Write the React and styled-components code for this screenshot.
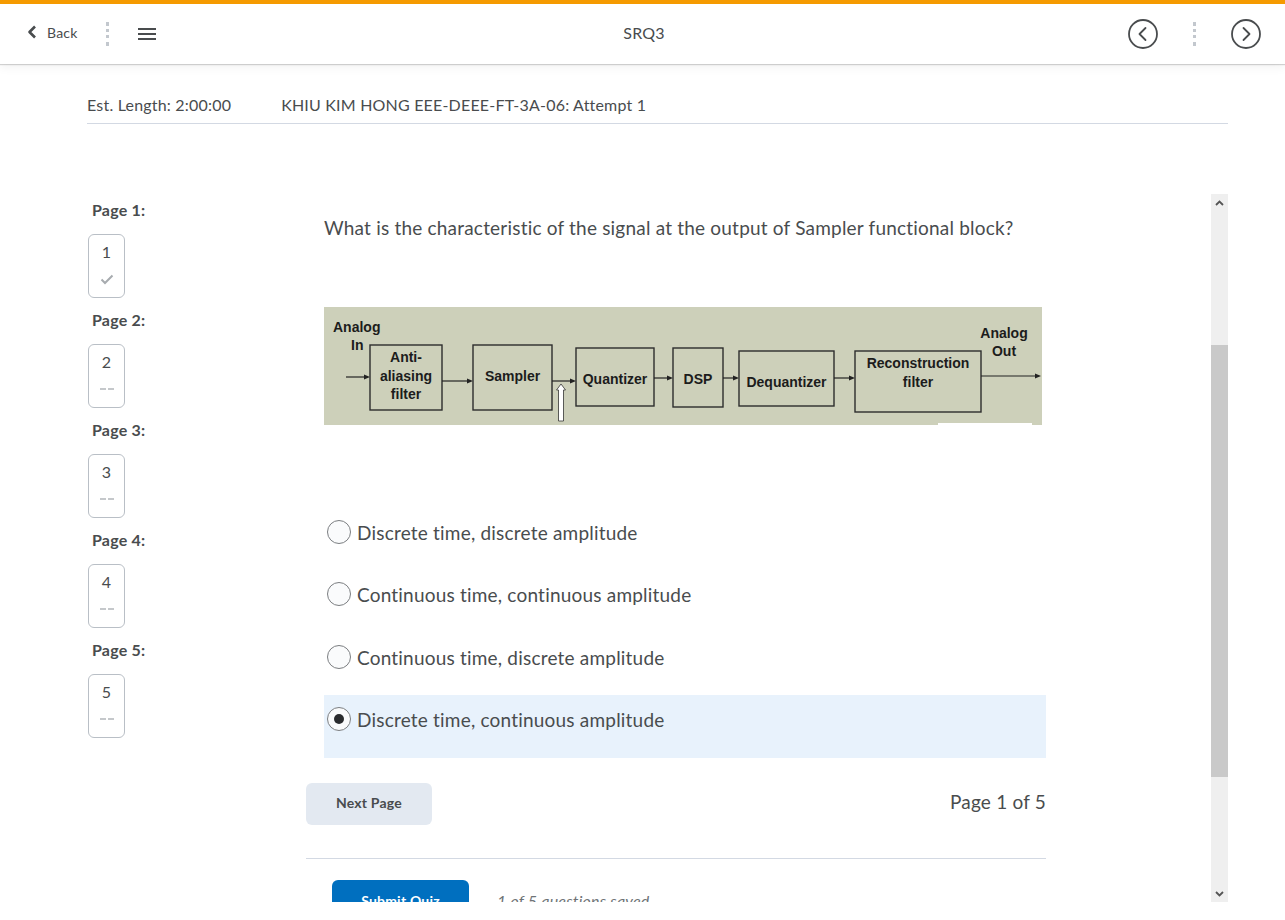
import React from 'react';
import styled, { createGlobalStyle } from 'styled-components';

const GlobalStyle = createGlobalStyle`
  html, body {
    margin: 0;
    padding: 0;
    background: #ffffff;
  }
  body {
    font-family: Lato, "Open Sans", "Liberation Sans", sans-serif;
    color: #494c4e;
    letter-spacing: 0.2px;
  }
  * {
    box-sizing: border-box;
  }
`;

const TopBar = styled.header`
  height: 64px;
  border-top: 4px solid #f59a00;
  display: flex;
  align-items: center;
  justify-content: space-between;
  padding: 0 24px 0 27px;
  background: #fff;
  box-shadow: 0 1px 1px rgba(0, 0, 0, 0.16), 0 3px 10px rgba(0, 0, 0, 0.06);
  position: relative;
  z-index: 1;
`;

const NavGroup = styled.div`
  display: flex;
  align-items: center;
  gap: ${p => p.$gap || 29}px;
  flex: 1;
  justify-content: ${p => (p.$end ? 'flex-end' : 'flex-start')};
`;

const BackLink = styled.a`
  display: flex;
  align-items: center;
  gap: 10px;
  margin: 0 -1px 4px 0;
  font-size: 14px;
  color: #494c4e;
  text-decoration: none;
`;

const Dots = styled.span`
  display: block;
  width: 0;
  height: 24px;
  border-left: 3px dotted #c3c8ce;
`;

const Title = styled.div`
  font-size: 16px;
  color: #494c4e;
  flex: 0 0 auto;
  margin-bottom: 4px;
`;

const Page = styled.div`
  padding: 0 57px 0 87px;
`;

const InfoRow = styled.div`
  margin-top: 29px;
  display: flex;
  gap: 50px;
  font-size: 16px;
  line-height: 24px;
  padding-bottom: 6px;
  border-bottom: 1px solid #d3d9e3;
`;

const Main = styled.div`
  margin-top: 70px;
  display: flex;
`;

const Sidebar = styled.nav`
  width: 219px;
  flex: 0 0 219px;
  padding-top: 6px;
`;

const PageGroup = styled.div`
  height: 110px;
`;

const PageLabel = styled.div`
  font-size: 16px;
  font-weight: 700;
  line-height: 20px;
  padding-left: 5px;
`;

const PageBox = styled.div`
  margin: 14px 0 0 1px;
  width: 37px;
  height: 64px;
  border: 1px solid #b9bfc6;
  border-radius: 6px;
  display: flex;
  flex-direction: column;
  align-items: center;
  padding-top: 7px;
  font-size: 16px;
  line-height: 20px;
`;

const PageMark = styled.div`
  margin-top: 9px;
  height: 16px;
  display: flex;
  align-items: center;
  justify-content: center;
`;

const Frame = styled.section`
  width: 922px;
  height: 708px;
  display: flex;
  overflow: hidden;
`;

const FrameContent = styled.div`
  flex: 1;
  overflow: hidden;
`;

const Inner = styled.div`
  width: 740px;
`;

const Question = styled.div`
  padding: 20px 0 0 18px;
  font-size: 19px;
  line-height: 28px;
`;

const Figure = styled.div`
  margin: 65px 0 0 18px;
  width: 718px;
  height: 118px;
  line-height: 0;
`;

const Options = styled.div`
  margin: 83px 0 0 18px;
  width: 722px;
`;

const Option = styled.label`
  display: flex;
  align-items: flex-start;
  gap: 6px;
  height: 62.4px;
  padding: 11px 0 0 3px;
  font-size: 19px;
  line-height: 28px;
  background: ${p => (p.$selected ? '#e8f2fc' : 'transparent')};
`;

const Radio = styled.span`
  margin-top: 1px;
  flex: 0 0 auto;
  width: 24px;
  height: 24px;
  border-radius: 50%;
  border: 1px solid #7b7e81;
  background: #fafbfc;
  display: flex;
  align-items: center;
  justify-content: center;

  &::after {
    content: '';
    width: 10px;
    height: 10px;
    border-radius: 50%;
    background: ${p => (p.$checked ? '#2a2c2e' : 'transparent')};
  }
`;

const PagerRow = styled.div`
  margin-top: 25px;
  display: flex;
  align-items: center;
  justify-content: space-between;
`;

const NextButton = styled.button`
  width: 126px;
  height: 42px;
  padding: 0 0 3px;
  border: none;
  border-radius: 6px;
  background: #e3e9f1;
  color: #494c4e;
  font-family: Lato, sans-serif;
  font-size: 14px;
  font-weight: 700;
  letter-spacing: 0.2px;
`;

const PageCount = styled.div`
  font-size: 19px;
  margin-bottom: 4px;
`;

const Rule = styled.hr`
  margin: 33px 0 0;
  border: none;
  border-top: 1px solid #d3d9e3;
`;

const SubmitRow = styled.div`
  margin: 21px 0 0 26px;
  display: flex;
  align-items: center;
  gap: 28px;
`;

const SubmitButton = styled.button`
  width: 137px;
  height: 42px;
  border: none;
  border-radius: 6px;
  background: #006fbf;
  color: #fff;
  font-family: Lato, sans-serif;
  font-size: 14px;
  font-weight: 700;
  letter-spacing: 0.2px;
`;

const Saved = styled.span`
  font-size: 16px;
  font-style: italic;
  color: #6e7376;
`;

const Scrollbar = styled.div`
  width: 17px;
  flex: 0 0 17px;
  background: #efefef;
  display: flex;
  flex-direction: column;
`;

const ScrollArrow = styled.div`
  height: 17px;
  display: flex;
  align-items: center;
  justify-content: center;
`;

const Track = styled.div`
  flex: 1;
`;

const Thumb = styled.div`
  margin-top: ${p => p.$offset}px;
  height: ${p => p.$size}px;
  background: #c9c9c9;
`;

const Check = () => (
  <svg width="14" height="11" viewBox="0 0 14 11">
    <path d="M1.5 5.5 L5 9 L12.5 1.5" fill="none" stroke="#a7abaf" strokeWidth="2" />
  </svg>
);

const Dash = () => (
  <svg width="16" height="4" viewBox="0 0 16 4">
    <path d="M1 2 H7 M9 2 H15" stroke="#b3b7bb" strokeWidth="1.5" />
  </svg>
);

const CircleChevron = ({ dir }) => (
  <svg width="30" height="30" viewBox="0 0 30 30">
    <circle cx="15" cy="15" r="14" fill="none" stroke="#494c4e" strokeWidth="1.8" />
    <path
      d={dir === 'left' ? 'M17.5 9 L11.5 15 L17.5 21' : 'M12.5 9 L18.5 15 L12.5 21'}
      fill="none"
      stroke="#494c4e"
      strokeWidth="1.8"
      strokeLinecap="round"
      strokeLinejoin="round"
    />
  </svg>
);

const Arrow = ({ x1, x2, y }) => (
  <g>
    <line x1={x1} y1={y} x2={x2 - 5} y2={y} stroke="#222" strokeWidth="1.2" />
    <path d={`M${x2 - 6} ${y - 2.5} L${x2} ${y} L${x2 - 6} ${y + 2.5} Z`} fill="#222" />
  </g>
);

const Block = ({ x, y, w, h, lines, ty }) => (
  <g>
    <rect x={x} y={y} width={w} height={h} fill="none" stroke="#2d2d2d" strokeWidth="1.4" />
    {lines.map((t, i) => (
      <text key={t} x={x + w / 2} y={ty + i * 18.5} textAnchor="middle">
        {t}
      </text>
    ))}
  </g>
);

const Diagram = () => (
  <svg width="718" height="118" viewBox="0 0 718 118">
    <rect width="718" height="118" fill="#cdd0ba" />
    <g fontFamily="'Liberation Sans', Arial, sans-serif" fontWeight="700" fontSize="14" fill="#1c1c1c" letterSpacing="0">
      <text x="9" y="25">Analog</text>
      <text x="27" y="43">In</text>
      <Arrow x1={22} x2={46} y={70} />
      <Block x={46} y={38} w={72} h={65} lines={['Anti-', 'aliasing', 'filter']} ty={55} />
      <Arrow x1={118} x2={149} y={74} />
      <Block x={149} y={38} w={79} h={65} lines={['Sampler']} ty={74} />
      <line x1={228} y1={74} x2={237} y2={74} stroke="#222" strokeWidth="1.2" />
      <Arrow x1={237} x2={252} y={74} />
      <path d="M237 77 L241.5 83 L239.5 83 L239.5 114 L234.5 114 L234.5 83 L232.5 83 Z" fill="#fff" stroke="#333" strokeWidth="0.8" />
      <Block x={252} y={41} w={78} h={58} lines={['Quantizer']} ty={77} />
      <Arrow x1={330} x2={349} y={71} />
      <Block x={349} y={41} w={50} h={59} lines={['DSP']} ty={77} />
      <Arrow x1={399} x2={415} y={71} />
      <Block x={415} y={44} w={95} h={55} lines={['Dequantizer']} ty={80} />
      <Arrow x1={510} x2={531} y={71} />
      <Block x={531} y={44} w={126} h={61} lines={['Reconstruction', 'filter']} ty={61} />
      <Arrow x1={657} x2={717} y={69} />
      <text x="680" y="31" textAnchor="middle">Analog</text>
      <text x="680" y="49" textAnchor="middle">Out</text>
    </g>
    <rect x="614" y="116" width="94" height="2" fill="#ffffff" />
  </svg>
);

const pages = [
  { n: 1, done: true },
  { n: 2 },
  { n: 3 },
  { n: 4 },
  { n: 5 },
];

const answers = [
  'Discrete time, discrete amplitude',
  'Continuous time, continuous amplitude',
  'Continuous time, discrete amplitude',
  'Discrete time, continuous amplitude',
];

export default function App() {
  const selected = 3;

  return (
    <>
      <GlobalStyle />
      <TopBar>
        <NavGroup>
          <BackLink href="#">
            <svg width="10" height="14" viewBox="0 0 10 14">
              <path d="M8 1.5 L2.5 7 L8 12.5" fill="none" stroke="#494c4e" strokeWidth="2.6" strokeLinejoin="round" />
            </svg>
            Back
          </BackLink>
          <Dots />
          <svg width="18" height="14" viewBox="0 0 18 14">
            <path d="M0 2 H18 M0 7 H18 M0 12 H18" stroke="#494c4e" strokeWidth="2" />
          </svg>
        </NavGroup>
        <Title>SRQ3</Title>
        <NavGroup $end $gap={35}>
          <CircleChevron dir="left" />
          <Dots />
          <CircleChevron dir="right" />
        </NavGroup>
      </TopBar>

      <Page>
        <InfoRow>
          <span>Est. Length: 2:00:00</span>
          <span>KHIU KIM HONG EEE-DEEE-FT-3A-06: Attempt 1</span>
        </InfoRow>

        <Main>
          <Sidebar>
            {pages.map(p => (
              <PageGroup key={p.n}>
                <PageLabel>Page {p.n}:</PageLabel>
                <PageBox>
                  {p.n}
                  <PageMark>{p.done ? <Check /> : <Dash />}</PageMark>
                </PageBox>
              </PageGroup>
            ))}
          </Sidebar>

          <Frame>
            <FrameContent>
              <Inner>
                <Question>
                  What is the characteristic of the signal at the output of Sampler functional block?
                </Question>
                <Figure>
                  <Diagram />
                </Figure>
                <Options>
                  {answers.map((a, i) => (
                    <Option key={a} $selected={i === selected}>
                      <Radio $checked={i === selected} />
                      {a}
                    </Option>
                  ))}
                </Options>
                <PagerRow>
                  <NextButton>Next Page</NextButton>
                  <PageCount>Page 1 of 5</PageCount>
                </PagerRow>
                <Rule />
                <SubmitRow>
                  <SubmitButton>Submit Quiz</SubmitButton>
                  <Saved>1 of 5 questions saved</Saved>
                </SubmitRow>
              </Inner>
            </FrameContent>
            <Scrollbar>
              <ScrollArrow>
                <svg width="9" height="6" viewBox="0 0 9 6">
                  <path d="M1 5 L4.5 1.5 L8 5" fill="none" stroke="#555" strokeWidth="1.8" />
                </svg>
              </ScrollArrow>
              <Track>
                <Thumb $offset={134} $size={432} />
              </Track>
              <ScrollArrow>
                <svg width="9" height="6" viewBox="0 0 9 6">
                  <path d="M1 1 L4.5 4.5 L8 1" fill="none" stroke="#555" strokeWidth="1.8" />
                </svg>
              </ScrollArrow>
            </Scrollbar>
          </Frame>
        </Main>
      </Page>
    </>
  );
}
